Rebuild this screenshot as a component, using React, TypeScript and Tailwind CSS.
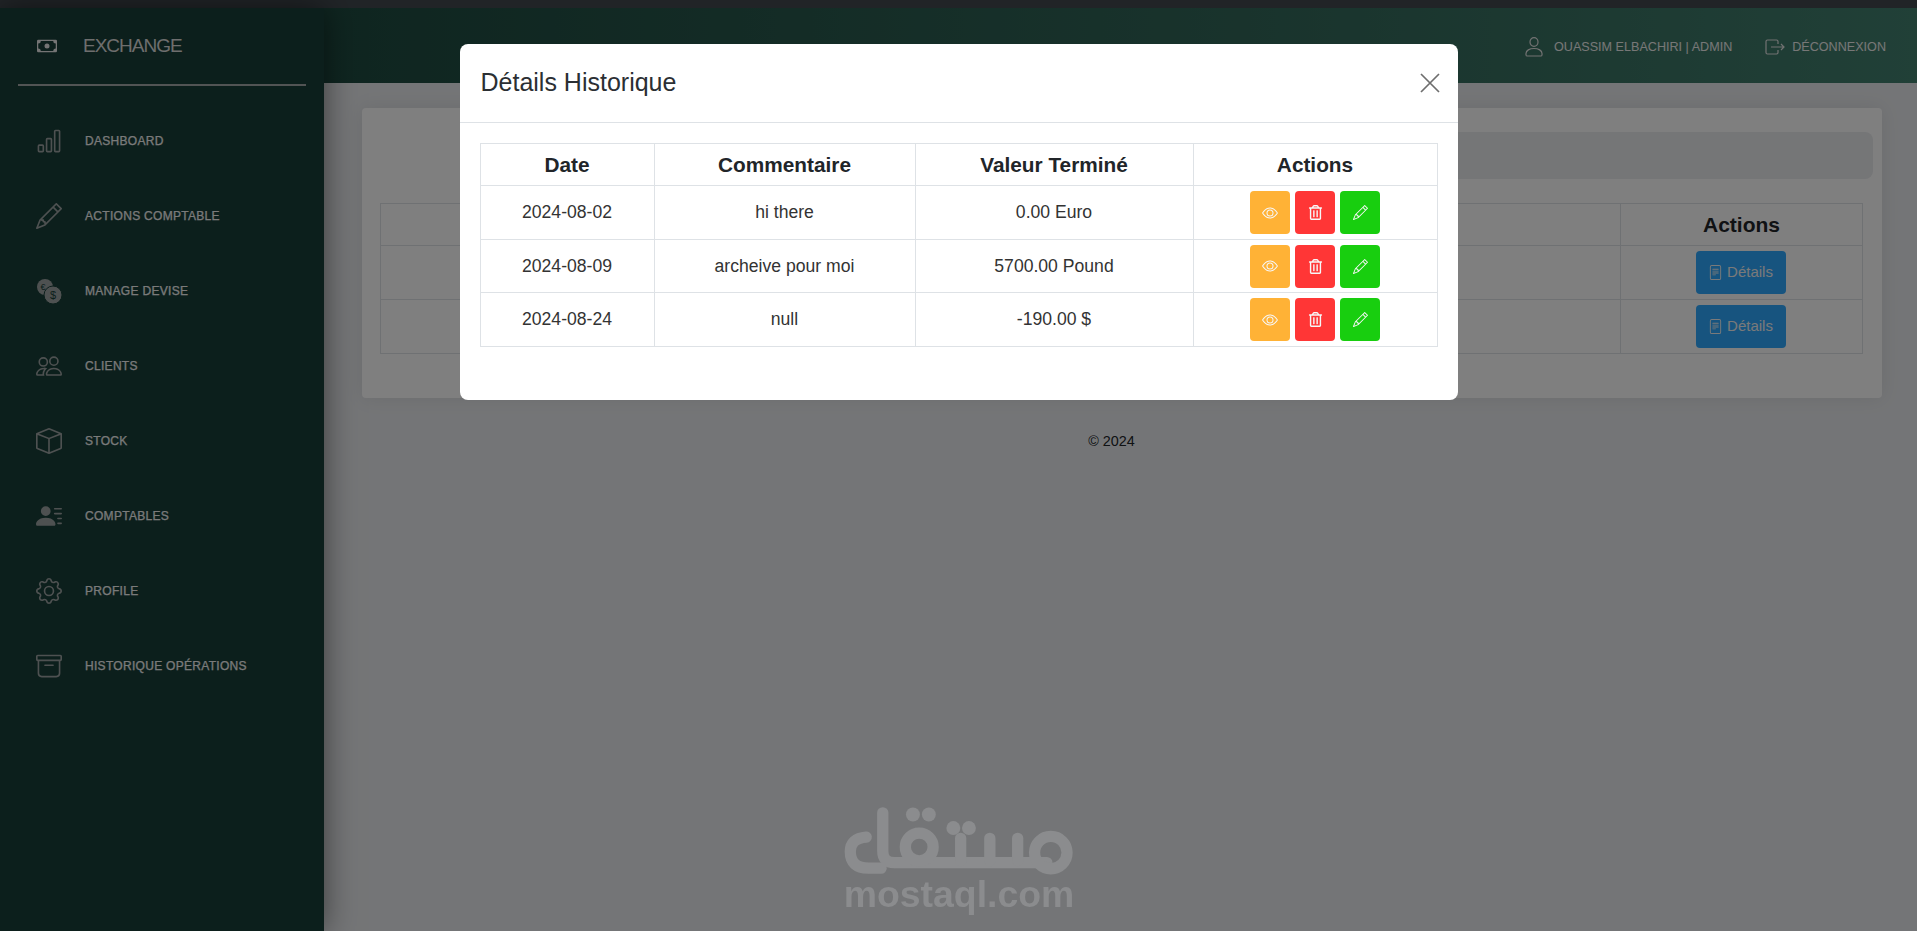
import { BsBarChart, BsPencil, BsPeople, BsBox, BsPersonLinesFill, BsGear, BsArchive, BsCash, BsEye, BsFileText } from "react-icons/bs";
import { FaRegTrashAlt } from "react-icons/fa";
import type { ReactNode } from "react";

function CoinsIcon() {
  return (
    <svg width="26" height="26" viewBox="0 0 26 26">
      <circle cx="9" cy="9" r="8" fill="currentColor" />
      <circle cx="17" cy="17" r="9" fill="currentColor" stroke="#183e38" strokeWidth="1" />
      <text x="17" y="21" fontSize="11" textAnchor="middle" fill="#183e38" fontFamily="Liberation Sans, sans-serif">$</text>
      <text x="7" y="12" fontSize="9" textAnchor="middle" fill="#183e38" fontFamily="Liberation Sans, sans-serif">€</text>
    </svg>
  );
}

function UserIcon() {
  return (
    <svg width="18" height="20" viewBox="0 0 18 20" fill="none" stroke="currentColor" strokeWidth="1.2">
      <ellipse cx="9" cy="5" rx="4" ry="4.4" />
      <path d="M1 18v-1.5C1 13.5 4.5 11.5 9 11.5s8 2 8 5V18a1.2 1.2 0 0 1-1.2 1H2.2A1.2 1.2 0 0 1 1 18z" />
    </svg>
  );
}

function LogoutIcon() {
  return (
    <svg width="20" height="16" viewBox="0 0 20 16" fill="none" stroke="currentColor" strokeWidth="1.2">
      <path d="M13 5V2.5A1.5 1.5 0 0 0 11.5 1h-9A1.5 1.5 0 0 0 1 2.5v11A1.5 1.5 0 0 0 2.5 15h9a1.5 1.5 0 0 0 1.5-1.5V11" />
      <path d="M6 8h13M16 5l3 3-3 3" />
    </svg>
  );
}

const NAV: { label: string; icon: ReactNode }[] = [
  { label: "DASHBOARD", icon: <BsBarChart size={26} /> },
  { label: "ACTIONS COMPTABLE", icon: <BsPencil size={26} /> },
  { label: "MANAGE DEVISE", icon: <CoinsIcon /> },
  { label: "CLIENTS", icon: <BsPeople size={26} /> },
  { label: "STOCK", icon: <BsBox size={26} /> },
  { label: "COMPTABLES", icon: <BsPersonLinesFill size={26} /> },
  { label: "PROFILE", icon: <BsGear size={26} /> },
  { label: "HISTORIQUE OPÉRATIONS", icon: <BsArchive size={26} /> },
];

const ROWS = [
  { date: "2024-08-02", comment: "hi there", value: "0.00 Euro", h: "h-[54px]" },
  { date: "2024-08-09", comment: "archeive pour moi", value: "5700.00 Pound", h: "h-[53px]" },
  { date: "2024-08-24", comment: "null", value: "-190.00 $", h: "h-[54px]" },
];

function Sidebar() {
  return (
    <aside className="w-[324px] shrink-0 bg-[#183e38] shadow-[0_0_30px_rgba(0,0,0,0.5)] z-10 text-[#f6f6f6]">
      <div className="mx-[18px] h-[78px] flex items-center pl-[19px] border-b-2 border-[#a4a8a8]">
        <BsCash size={20} className="text-[#e8e8e8]" />
        <span className="ml-[26px] text-[19px] tracking-[-1px] text-[#dcdcdc]">EXCHANGE</span>
      </div>
      <nav className="mt-[17px] flex flex-col">
        {NAV.map((item) => (
          <div key={item.label} className="h-[75px] flex items-center pl-[36px]">
            <span className="w-[26px] h-[26px] text-[#9da3a3] flex items-center justify-center">{item.icon}</span>
            <span className="ml-[23px] text-[12px] tracking-[0.3px] [-webkit-text-stroke:0.25px_#f4f4f4] text-[#f4f4f4]">{item.label}</span>
          </div>
        ))}
      </nav>
    </aside>
  );
}

function Header() {
  return (
    <header className="h-[75px] pt-[3px] flex items-center justify-end pr-[31px] bg-gradient-to-r from-[#1e4a40] via-[#33685a] via-[60%] to-[#42806f] text-[#eeeeee] text-[12.6px]">
      <span className="text-[#e4e4e4]"><UserIcon /></span>
      <span className="ml-[11px]">OUASSIM ELBACHIRI | ADMIN</span>
      <span className="ml-[33px] text-[#e4e4e4]"><LogoutIcon /></span>
      <span className="ml-[7px]">DÉCONNEXION</span>
    </header>
  );
}

function BackgroundCard() {
  return (
    <div className="ml-[38px] mr-[35px] mt-[25px] h-[290px] bg-white rounded shadow-[0_0_20px_rgba(0,0,0,0.08)] pl-[18px] pr-[19px] pt-[24px]">
      <div className="h-[47px] ml-[100px] -mr-[10px] rounded-lg bg-[#eaecef]" />
      <table className="mt-[24px] w-full border-collapse table-fixed">
        <colgroup>
          <col />
          <col className="w-[242px]" />
        </colgroup>
        <thead>
          <tr className="h-[42px]">
            <th className="border border-[#dee2e6]" />
            <th className="border border-[#dee2e6] text-[21px] text-[#212529]">Actions</th>
          </tr>
        </thead>
        <tbody>
          {[0, 1].map((i) => (
            <tr key={i} className="h-[54px]">
              <td className="border border-[#dee2e6]" />
              <td className="border border-[#dee2e6] text-center pr-[2px]">
                <button className="w-[90px] h-[43px] inline-flex items-center justify-center gap-[4px] rounded bg-[#2ea8fe] text-[#f4f4f4] text-[15px] align-middle">
                  <BsFileText size={15} /> Détails
                </button>
              </td>
            </tr>
          ))}
        </tbody>
      </table>
    </div>
  );
}

function Watermark() {
  return (
    <div className="fixed left-[843px] top-[806px] w-[232px] flex flex-col items-center text-[#8b8c8e] pointer-events-none z-50">
      <svg width="232" height="70" viewBox="185 135 700 210" fill="none" stroke="currentColor" strokeWidth="34" strokeLinecap="round" strokeLinejoin="round">
        <path d="M305 155 V270 Q305 305 340 305 H800" />
        <path d="M255 228 Q207 232 207 272 Q207 322 262 322 H300" />
        <circle cx="415" cy="258" r="42" />
        <path d="M540 232 V300 M628 232 V300 M712 232 V300" />
        <circle cx="812" cy="275" r="49" />
        <g fill="currentColor" stroke="none">
          <circle cx="396" cy="160" r="21" />
          <circle cx="444" cy="160" r="21" />
          <circle cx="518" cy="201" r="21" />
          <circle cx="565" cy="201" r="21" />
        </g>
      </svg>
      <span className="mt-[-3px] text-[37.4px] leading-[42px] font-bold whitespace-nowrap">mostaql.com</span>
    </div>
  );
}

function ActionButton({ color, children }: { color: string; children: ReactNode }) {
  return (
    <button className={`w-[40px] h-[43px] rounded flex items-center justify-center text-[#f7f7f7] ${color}`}>
      {children}
    </button>
  );
}

function Modal() {
  return (
    <div className="fixed inset-0 bg-black/50 z-40 flex justify-center">
      <div className="mt-[44px] w-[998px] h-[356px] bg-white rounded-lg text-[#212529] self-start">
        <div className="h-[79px] flex items-center justify-between pl-[21px] pr-[18px] border-b border-[#dee2e6]">
          <h5 className="text-[25px] text-[#2b2f33]">Détails Historique</h5>
          <svg width="20" height="20" viewBox="0 0 20 20" stroke="#6e6e6e" strokeWidth="1.7">
            <path d="M1 1l18 18M19 1L1 19" />
          </svg>
        </div>
        <div className="px-[20px] pt-[20px]">
          <table className="w-[957px] border-collapse table-fixed text-center">
            <colgroup>
              <col className="w-[174px]" />
              <col className="w-[261px]" />
              <col className="w-[278px]" />
              <col className="w-[244px]" />
            </colgroup>
            <thead>
              <tr className="h-[42px] text-[20.8px]">
                <th className="border border-[#dee2e6]">Date</th>
                <th className="border border-[#dee2e6]">Commentaire</th>
                <th className="border border-[#dee2e6]">Valeur Terminé</th>
                <th className="border border-[#dee2e6]">Actions</th>
              </tr>
            </thead>
            <tbody className="text-[17.6px] text-[#333333]">
              {ROWS.map((r) => (
                <tr key={r.date} className={r.h}>
                  <td className="border border-[#dee2e6]">{r.date}</td>
                  <td className="border border-[#dee2e6]">{r.comment}</td>
                  <td className="border border-[#dee2e6]">{r.value}</td>
                  <td className="border border-[#dee2e6]">
                    <div className="flex gap-[5px] justify-center">
                      <ActionButton color="bg-[#ffb236]"><BsEye size={16} /></ActionButton>
                      <ActionButton color="bg-[#ff3636]"><FaRegTrashAlt size={15} /></ActionButton>
                      <ActionButton color="bg-[#18ce0f]"><BsPencil size={15} /></ActionButton>
                    </div>
                  </td>
                </tr>
              ))}
            </tbody>
          </table>
        </div>
      </div>
    </div>
  );
}

export default function App() {
  return (
    <div className="h-[931px] overflow-hidden flex flex-col bg-[#e9ebee] font-['Liberation_Sans',Arial,sans-serif]">
      <div className="h-[8px] shrink-0 bg-[#42494f]" />
      <div className="flex flex-1 min-h-0">
        <Sidebar />
        <main className="flex-1 min-w-0">
          <Header />
          <BackgroundCard />
          <p className="mt-[33px] text-center text-[14.4px] text-[#212529] pr-[18px]">© 2024</p>
        </main>
      </div>
      <Modal />
      <Watermark />
    </div>
  );
}
